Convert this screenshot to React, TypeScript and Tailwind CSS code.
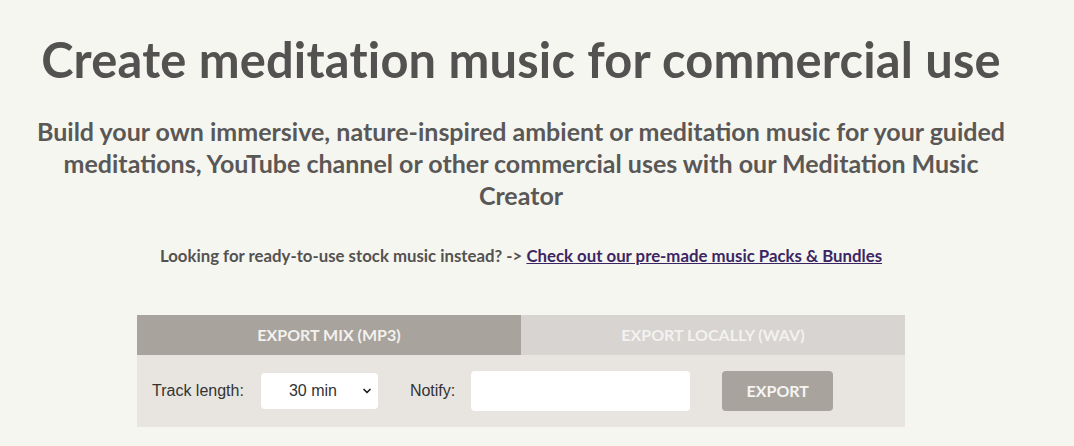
import { ChevronDown } from 'lucide-react';

export default function App() {
  return (
    <div
      className="min-h-[446px] w-full bg-[#f6f6f1] text-[#545250]"
      style={{ fontFamily: 'Lato, "Open Sans", sans-serif' }}
    >
      <div className="flex w-[1042px] flex-col items-center pt-[31px]">
        <h1 className="text-[48.8px] font-bold leading-[56px] tracking-[0.2px] text-[#545250]">
          Create meditation music for commercial use
        </h1>
        <p className="mt-[28px] w-[985px] text-center text-[25px] font-bold leading-[32px] text-[#5a5856]">
          Build your own immersive, nature-inspired ambient or meditation music for your guided
          meditations, YouTube channel or other commercial uses with our Meditation Music Creator
        </p>
        <p className="mt-[35px] text-[16.8px] font-bold leading-[20px] text-[#545250]">
          Looking for ready-to-use stock music instead? -&gt;{' '}
          <a href="#" className="text-[#3b2663] underline">
            Check out our pre-made music Packs &amp; Bundles
          </a>
        </p>

        <div className="mt-[49px] w-[768px]">
          <div className="flex h-[40px] text-[16px] font-bold">
            <button className="flex w-1/2 items-center justify-center bg-[#a8a39d] text-[#f3f1ee]">
              EXPORT MIX (MP3)
            </button>
            <button className="flex w-1/2 items-center justify-center bg-[#d7d4d1] text-[#f3f2f0]">
              EXPORT LOCALLY (WAV)
            </button>
          </div>
          <div
            className="flex h-[72px] items-center bg-[#e8e5e0] pl-[15px] text-[16px] text-[#333]"
            style={{ fontFamily: '"Liberation Sans", Arial, sans-serif' }}
          >
            <span>Track length:</span>
            <div className="relative ml-[17px] h-[36px] w-[117px] rounded-[4px] bg-white">
              <span className="absolute left-[28px] top-[8px] leading-[20px]">30 min</span>
              <ChevronDown size={12} strokeWidth={3.5} className="absolute right-[5px] top-[12px] text-[#222]" />
            </div>
            <span className="ml-[32px]">Notify:</span>
            <input className="ml-[16px] h-[40px] w-[219px] rounded-[4px] bg-white outline-none" />
            <button
              className="ml-[32px] h-[40px] w-[111px] rounded-[4px] bg-[#a8a39d] text-[16px] font-bold text-[#f6f5f3]"
              style={{ fontFamily: 'Lato, sans-serif' }}
            >
              EXPORT
            </button>
          </div>
        </div>
      </div>
    </div>
  );
}
